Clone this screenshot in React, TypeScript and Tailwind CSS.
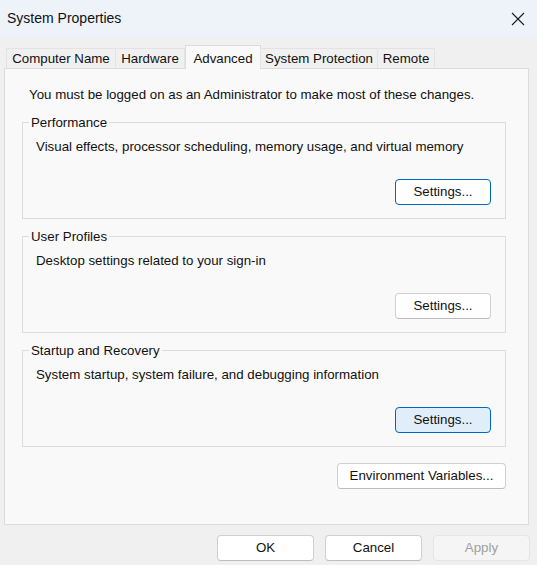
import { useState } from "react";

const font = { fontFamily: '"Liberation Sans", Arial, sans-serif' };

const tabs = [
  { name: "Computer Name", w: "w-[110px]" },
  { name: "Hardware", w: "w-[70px]" },
  { name: "Advanced", w: "w-[76px]" },
  { name: "System Protection", w: "w-[118px]" },
  { name: "Remote", w: "w-[58px]" },
];

function Btn({
  children,
  variant = "normal",
  className = "",
}: {
  children: React.ReactNode;
  variant?: "normal" | "focus" | "hover" | "disabled";
  className?: string;
}) {
  const look =
    variant === "focus"
      ? "bg-white border-[#0067c0]"
      : variant === "hover"
        ? "bg-[#e0eef9] border-[#0067c0]"
        : variant === "disabled"
          ? "bg-[#f5f5f5] border-[#e5e5e5] text-[#a0a0a0]"
          : "bg-white border-[#d0d0d0] border-b-[#bcbcbc]";
  return (
    <button
      type="button"
      disabled={variant === "disabled"}
      className={`h-[26px] rounded-[4px] border text-[13.3px] leading-none flex items-center justify-center ${look} ${className}`}
    >
      {children}
    </button>
  );
}

function Group({
  title,
  desc,
  variant,
  className = "",
}: {
  title: string;
  desc: string;
  variant?: "normal" | "focus" | "hover";
  className?: string;
}) {
  return (
    <div className={`relative h-[97px] border border-[#dcdcdc] flex flex-col ${className}`}>
      <span className="absolute -top-[8px] left-[6px] px-[2px] bg-[#f9f9f9] text-[13.3px] leading-[16px]">
        {title}
      </span>
      <p className="pt-[16px] pl-[13px] text-[13.3px] leading-[16px]">{desc}</p>
      <Btn variant={variant} className="w-[96px] self-end mr-[14px] mt-auto mb-[13px]">
        Settings...
      </Btn>
    </div>
  );
}

export default function App() {
  const [active, setActive] = useState("Advanced");

  return (
    <div style={font} className="w-[537px] h-[565px] bg-[#f0f0f0] text-[#111] flex flex-col overflow-hidden">
      {/* title bar */}
      <div className="h-[37px] bg-[#eef2f9] flex items-center justify-between pl-[7px] pr-[12px]">
        <span className="text-[14px]">System Properties</span>
        <svg width="14" height="14" viewBox="0 0 14 14" className="text-[#1a1a1a]">
          <path d="M1 1 L13 13 M13 1 L1 13" stroke="currentColor" strokeWidth="1.1" />
        </svg>
      </div>

      <div className="pl-[4px] pr-[8px] pt-[8px]">
        {/* tab strip */}
        <div className="flex items-end h-[23px] pl-[2px] relative z-10">
          {tabs.map((t) => {
            const sel = t.name === active;
            return (
              <div
                key={t.name}
                onClick={() => setActive(t.name)}
                className={`${t.w} flex justify-center border border-b-0 text-[13.3px] ${
                  sel
                    ? "h-[24px] bg-[#f9f9f9] border-[#dcdcdc] -mb-px pt-[3px] items-start"
                    : "h-[20px] bg-[#f0f0f0] border-[#e3e3e3] -ml-px first:ml-0 items-center"
                }`}
              >
                {t.name}
              </div>
            );
          })}
        </div>

        {/* tab page */}
        <div className="h-[457px] border border-[#dcdcdc] bg-[#f9f9f9] flex flex-col pl-[17px] pr-[22px]">
          <p className="pt-[18px] pl-[7px] text-[13.3px] leading-[16px]">
            You must be logged on as an Administrator to make most of these changes.
          </p>
          <Group
            className="mt-[19px]"
            title="Performance"
            desc="Visual effects, processor scheduling, memory usage, and virtual memory"
            variant="focus"
          />
          <Group
            className="mt-[17px]"
            title="User Profiles"
            desc="Desktop settings related to your sign-in"
          />
          <Group
            className="mt-[17px]"
            title="Startup and Recovery"
            desc="System startup, system failure, and debugging information"
            variant="hover"
          />
          <Btn className="w-[169px] self-end mt-[16px]">Environment Variables...</Btn>
        </div>
      </div>

      {/* dialog buttons */}
      <div className="flex justify-end gap-[11px] pr-[7px] pt-[10px]">
        <Btn className="w-[97px]">OK</Btn>
        <Btn className="w-[97px]">Cancel</Btn>
        <Btn className="w-[97px]" variant="disabled">
          Apply
        </Btn>
      </div>
    </div>
  );
}
